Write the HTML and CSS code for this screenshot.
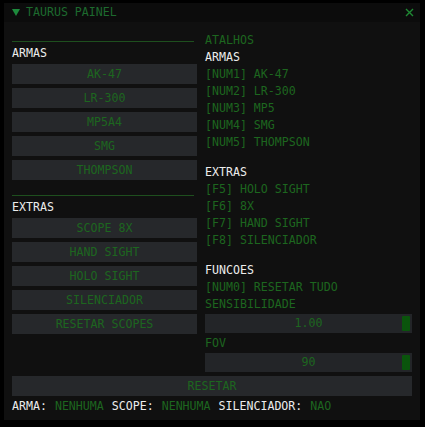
FILE: index.html
```html
<!DOCTYPE html>
<html lang="pt">
<head>
<meta charset="UTF-8" />
<title>Taurus Painel</title>
<link rel="stylesheet" href="styles.css">
</head>
<body>
  <div class="window">
    <div class="titlebar">
      <svg class="arrow" width="8" height="7" viewBox="0 0 8 7"><polygon points="0,0 8,0 4,7" /></svg>
      <span class="title">TAURUS PAINEL</span>
      <svg class="close" width="9" height="9" viewBox="0 0 9 9"><path d="M1 1 L8 8 M8 1 L1 8" /></svg>
    </div>

    <div class="content">
      <div class="columns">
        <!-- botoes -->
        <div class="col left">
          <div class="sep first"></div>
          <div class="label">ARMAS</div>
          <div class="btn">AK-47</div>
          <div class="btn">LR-300</div>
          <div class="btn">MP5A4</div>
          <div class="btn">SMG</div>
          <div class="btn">THOMPSON</div>
          <div class="sep"></div>
          <div class="label">EXTRAS</div>
          <div class="btn">SCOPE 8X</div>
          <div class="btn">HAND SIGHT</div>
          <div class="btn">HOLO SIGHT</div>
          <div class="btn">SILENCIADOR</div>
          <div class="btn">RESETAR SCOPES</div>
        </div>

        <!-- atalhos -->
        <div class="col right">
          <div class="line">ATALHOS</div>
          <div class="label">ARMAS</div>
          <div class="line">[NUM1] AK-47</div>
          <div class="line">[NUM2] LR-300</div>
          <div class="line">[NUM3] MP5</div>
          <div class="line">[NUM4] SMG</div>
          <div class="line">[NUM5] THOMPSON</div>
          <div class="label section">EXTRAS</div>
          <div class="line">[F5] HOLO SIGHT</div>
          <div class="line">[F6] 8X</div>
          <div class="line">[F7] HAND SIGHT</div>
          <div class="line">[F8] SILENCIADOR</div>
          <div class="label section">FUNCOES</div>
          <div class="line">[NUM0] RESETAR TUDO</div>
          <div class="line">SENSIBILIDADE</div>
          <div class="slider"><span>1.00</span><div class="grab"></div></div>
          <div class="line">FOV</div>
          <div class="slider"><span>90</span><div class="grab"></div></div>
        </div>
      </div>

      <div class="btn">RESETAR</div>

      <div class="status">
        <span class="label">ARMA:</span><span class="line">NENHUMA</span>
        <span class="label">SCOPE:</span><span class="line">NENHUMA</span>
        <span class="label">SILENCIADOR:</span><span class="line">NAO</span>
      </div>
    </div>
  </div>
</body>
</html>
```

FILE: styles.css
```css
body{
  margin: 0;
  background-color: #000;
  font-family: "DejaVu Sans Mono", "Liberation Mono", monospace;
  font-size: 11.6px;
  line-height: 13px;
}

.window{
  margin: 3px 0 0 4px;
  width: 416px;
  height: 417px;
  background-color: #101010;
  display: flex;
  flex-direction: column;
}

.titlebar{
  height: 19px;
  background-color: #0c0c0c;
  display: flex;
  align-items: center;
  padding: 0 6px 0 8px;
}

.arrow{
  fill: #1d8a3c;
  margin-right: 6px;
}

.title{
  color: #1d6a2e;
  flex: 1;
}

.close{
  stroke: #1f8a34;
  stroke-width: 1.4;
  margin-bottom: 1px;
}

.content{
  padding: 12px 8px 0 8px;
  display: flex;
  flex-direction: column;
  gap: 4px;
}

.columns{
  display: flex;
  gap: 8px;
  align-items: flex-start;
}

.col{
  display: flex;
  flex-direction: column;
  gap: 4px;
}

.left{
  width: 185px;
}

.right{
  flex: 1;
}

.sep{
  height: 1px;
  background-color: #1e4f1e;
  margin: 11px 3px 1px 0;
}

.sep.first{
  margin-top: 7px;
}

.label{
  color: #ececec;
  height: 13px;
}

.label.section{
  margin-top: 13px;
}

.line{
  color: #1d661f;
  height: 13px;
}

.btn{
  height: 20px;
  background-color: #26282b;
  color: #1d661f;
  display: flex;
  align-items: center;
  justify-content: center;
}

.slider{
  position: relative;
  height: 19px;
  margin-top: -1px;
  background-color: #232528;
  color: #1d661f;
  display: flex;
  align-items: center;
  justify-content: center;
}

.grab{
  position: absolute;
  top: 2px;
  bottom: 2px;
  right: 2px;
  width: 8px;
  border-radius: 1px;
  background-color: #0a540c;
}

.status{
  display: flex;
  gap: 8px;
  height: 13px;
}
```
